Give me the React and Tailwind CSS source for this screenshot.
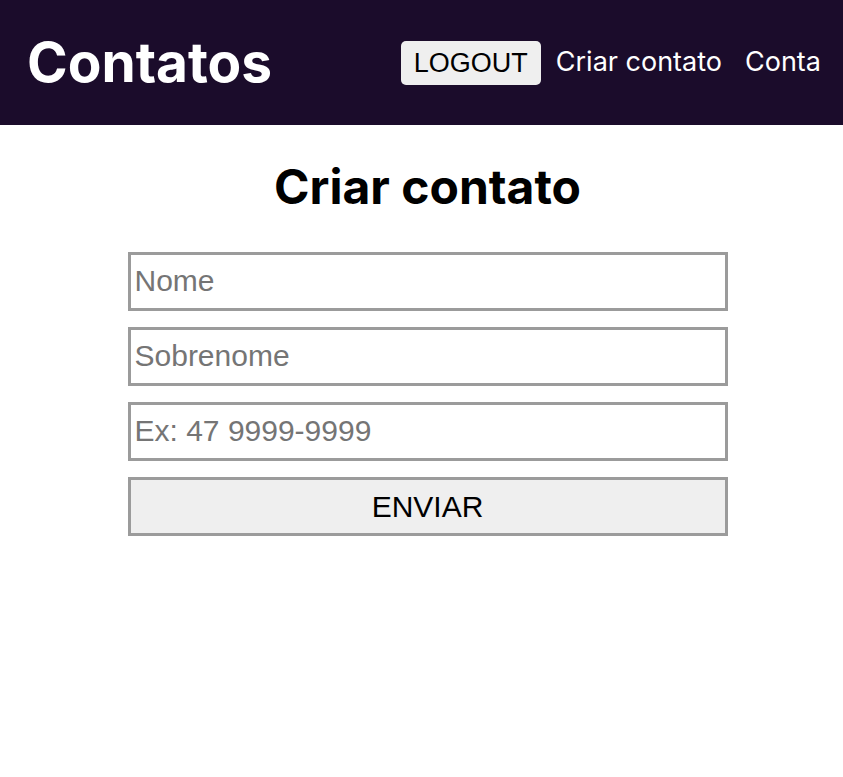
export default function App() {
  return (
    <div className="min-h-[777px] bg-white font-['Inter',sans-serif]">
      <header className="flex h-[125px] items-center justify-between bg-[#1b0c2b] pl-[27px] pr-[22px]">
        <h1 className="text-[55px] font-bold leading-none text-white">Contatos</h1>
        <nav className="flex items-center gap-[15px]">
          <button className="rounded-[5px] bg-[#efefef] px-[13px] py-[6px] font-['Liberation_Sans',Arial,sans-serif] text-[27px] leading-[32px] text-black">
            LOGOUT
          </button>
          <a className="text-[27px] text-white" href="#">Criar contato</a>
          <a className="ml-[8px] text-[27px] text-white" href="#">Conta</a>
        </nav>
      </header>

      <main className="flex flex-col items-center pl-[12px]">
        <h2 className="mt-[33px] text-[48px] font-bold leading-[1.2] text-black">Criar contato</h2>
        <form className="mt-[36px] flex w-[600px] flex-col gap-[16px] font-['Liberation_Sans',Arial,sans-serif]">
          <input
            className="h-[59px] border-[3px] border-[#9b9b9b] px-[4px] text-[30px] outline-none placeholder:text-[#757575]"
            placeholder="Nome"
          />
          <input
            className="h-[59px] border-[3px] border-[#9b9b9b] px-[4px] text-[30px] outline-none placeholder:text-[#757575]"
            placeholder="Sobrenome"
          />
          <input
            className="h-[59px] border-[3px] border-[#9b9b9b] px-[4px] text-[30px] outline-none placeholder:text-[#757575]"
            placeholder="Ex: 47 9999-9999"
          />
          <button
            type="button"
            className="h-[59px] border-[3px] border-[#9b9b9b] bg-[#efefef] text-[30px] text-black"
          >
            ENVIAR
          </button>
        </form>
      </main>
    </div>
  );
}
